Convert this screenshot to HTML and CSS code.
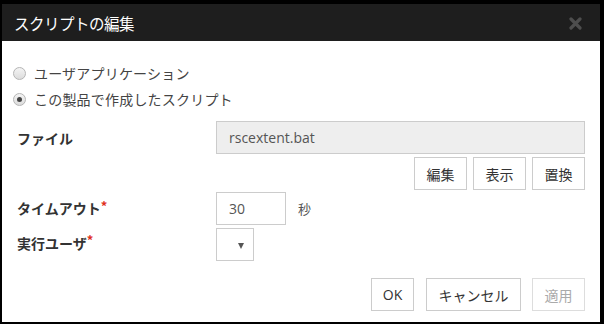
FILE: index.html
```html
<!DOCTYPE html>
<html lang="ja">
<head>
<meta charset="utf-8">
<link rel="stylesheet" href="styles.css">
</head>
<body>
<div class="dialog">
  <div class="titlebar">
    <span class="title">スクリプトの編集</span>
    <svg class="close" width="13" height="13" viewBox="0 0 13 13"><path d="M2 2 L11 11 M11 2 L2 11" stroke="#4e4e4e" stroke-width="3.2" stroke-linecap="round"/></svg>
  </div>
  <div class="content">
    <div class="radio-row"><span class="radio"></span><span>ユーザアプリケーション</span></div>
    <div class="radio-row"><span class="radio checked"></span><span>この製品で作成したスクリプト</span></div>
    <div class="form">
      <div class="label">ファイル</div>
      <div class="field"><div class="input wide readonly">rscextent.bat</div></div>
      <div></div>
      <div class="btns"><button class="btn">編集</button><button class="btn">表示</button><button class="btn">置換</button></div>
      <div class="label">タイムアウト<span class="req">*</span></div>
      <div class="field"><div class="input small">30</div><span class="unit">秒</span></div>
      <div class="label">実行ユーザ<span class="req">*</span></div>
      <div class="field"><div class="select"><span class="arrow"></span></div></div>
    </div>
    <div class="footer">
      <button class="btn ok">OK</button>
      <button class="btn cancel">キャンセル</button>
      <button class="btn disabled">適用</button>
    </div>
  </div>
</div>
</body>
</html>
```
FILE: styles.css
```css
html, body { margin: 0; padding: 0; }
body {
  background: #000;
  width: 604px;
  height: 324px;
  overflow: hidden;
  font-family: "Noto Sans CJK JP", "Open Sans", sans-serif;
  font-size: 14px;
  color: #333;
}
.dialog {
  margin: 4px 0 0 2px;
  width: 598px;
}
.titlebar {
  height: 37px;
  background: #1e1e1e;
  display: flex;
  align-items: center;
  justify-content: space-between;
  padding: 0 18px 0 12px;
}
.title {
  color: #fff;
  font-size: 15.5px;
  letter-spacing: -0.5px;
}
.close { display: block; margin-top: 1px; }
.content {
  background: #fff;
  height: 281px;
  box-sizing: border-box;
  padding: 19px 15px 0 15px;
}
.radio-row {
  height: 26px;
  display: flex;
  align-items: center;
  margin-left: -4px;
  color: #444;
  letter-spacing: 0.2px;
}
.radio {
  width: 11px;
  height: 11px;
  border-radius: 50%;
  border: 1px solid #b5b5b5;
  background: linear-gradient(#f4f4f4, #dcdcdc);
  margin-right: 8px;
  position: relative;
}
.radio.checked::after {
  content: "";
  position: absolute;
  left: 3px; top: 3px;
  width: 5px; height: 5px;
  border-radius: 50%;
  background: #444;
}
.form {
  margin-top: 9px;
  display: grid;
  grid-template-columns: 199px 1fr;
  row-gap: 0;
}
.label {
  font-weight: bold;
  font-size: 14px;
  color: #333;
  display: flex;
  align-items: center;
}
.req { color: #e0301e; font-weight: bold; align-self: flex-start; margin-top: 5px; font-size: 13px; }
.field { display: flex; align-items: center; }
.input {
  height: 33px;
  box-sizing: border-box;
  border: 1px solid #ccc;
  display: flex;
  align-items: center;
  padding-left: 12px;
  font-family: "Open Sans", "Noto Sans CJK JP", sans-serif;
  font-size: 14px;
  color: #555;
}
.input.wide { width: 369px; }
.input.readonly { background: #eee; }
.input.small { width: 70px; margin-top: 1px; }
.unit { margin-left: 12px; color: #555; font-size: 13px; }
.btns {
  display: flex;
  justify-content: flex-end;
  gap: 6px;
  margin-top: 3px;
  margin-bottom: 1px;
}
.btn {
  height: 33px;
  box-sizing: border-box;
  border: 1px solid #ccc;
  background: #fff;
  font-family: "Noto Sans CJK JP", "Open Sans", sans-serif;
  font-size: 14px;
  color: #333;
  padding: 0;
  width: 53px;
}
.select {
  width: 38px;
  height: 33px;
  box-sizing: border-box;
  border: 1px solid #ccc;
  margin-top: 3px;
  position: relative;
}
.arrow {
  position: absolute;
  right: 9px;
  top: 14px;
  width: 0; height: 0;
  border-left: 3.5px solid transparent;
  border-right: 3.5px solid transparent;
  border-top: 6px solid #555;
}
.footer {
  margin-top: 17px;
  display: flex;
  justify-content: flex-end;
  gap: 12px;
}
.btn.ok { width: 43px; font-family: "Open Sans", sans-serif; font-size: 14px; }
.btn.cancel { width: 95px; }
.btn.disabled { width: 53px; color: #aaa; border-color: #ddd; margin-left: -1px; }
```
